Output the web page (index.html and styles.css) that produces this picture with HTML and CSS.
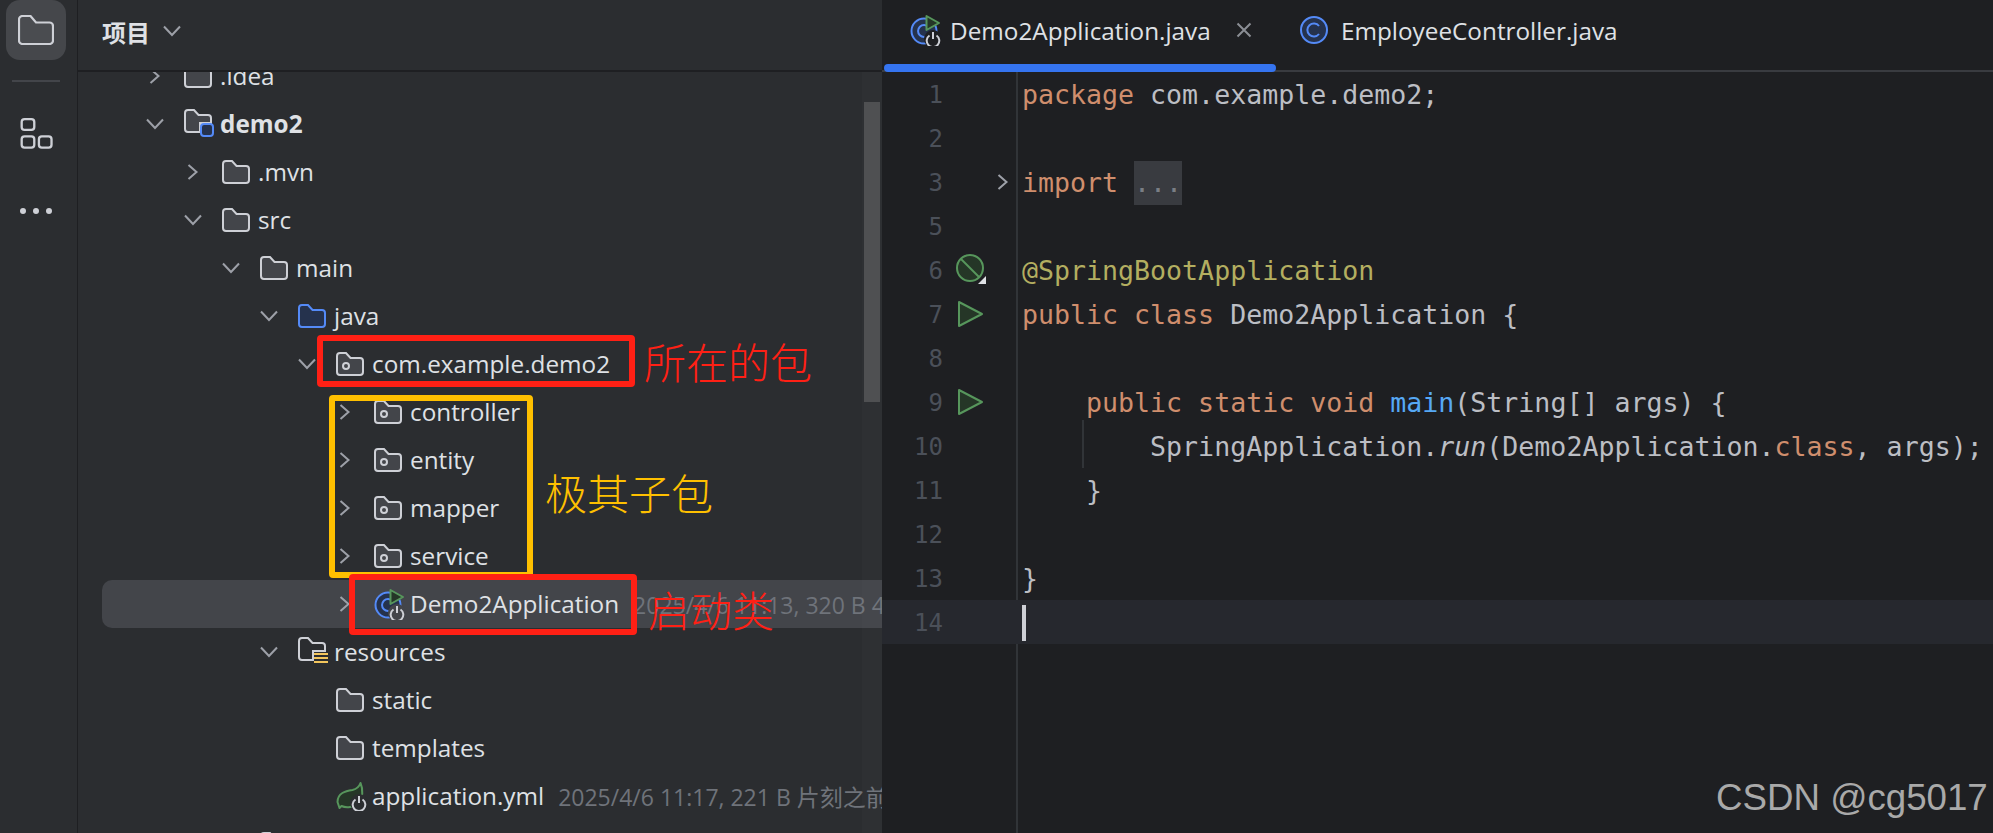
FILE: index.html
```html
<!DOCTYPE html>
<html lang="zh">
<head>
<meta charset="utf-8">
<title>Demo2Application.java</title>
<link rel="stylesheet" href="styles.css">
</head>
<body>
<svg class="defs" aria-hidden="true">
  <defs>
    <symbol id="ch-r" viewBox="0 0 22 22"><polyline points="6.5,4 14.5,11 6.5,18" fill="none" stroke="#9da0a8" stroke-width="2"/></symbol>
    <symbol id="ch-d" viewBox="0 0 22 22"><polyline points="3,6.5 11,15 19,6.5" fill="none" stroke="#9da0a8" stroke-width="2"/></symbol>
    <symbol id="folder" viewBox="0 0 28 24"><path d="M1 4a3 3 0 0 1 3-3h6l4.500 5H24a3 3 0 0 1 3 3v11a3 3 0 0 1-3 3H4a3 3 0 0 1-3-3z" fill="#43454a" stroke="#ced0d6" stroke-width="2"/></symbol>
    <symbol id="pkg" viewBox="0 0 28 24"><path d="M1 4a3 3 0 0 1 3-3h6l4.500 5H24a3 3 0 0 1 3 3v11a3 3 0 0 1-3 3H4a3 3 0 0 1-3-3z" fill="#43454a" stroke="#ced0d6" stroke-width="2"/><circle cx="10" cy="14" r="3" fill="none" stroke="#ced0d6" stroke-width="2"/></symbol>
    <symbol id="src" viewBox="0 0 28 24"><path d="M1 4a3 3 0 0 1 3-3h6l4.500 5H24a3 3 0 0 1 3 3v11a3 3 0 0 1-3 3H4a3 3 0 0 1-3-3z" fill="#25324d" stroke="#548af7" stroke-width="2"/></symbol>
    <symbol id="module" viewBox="0 0 32 30"><path d="M1 4a3 3 0 0 1 3-3h6l4.500 5H24a3 3 0 0 1 3 3v5H16v9H4a3 3 0 0 1-3-3z" fill="#43454a" stroke="#ced0d6" stroke-width="2"/><rect x="17" y="15" width="12" height="12" rx="3" fill="#25324d" stroke="#548af7" stroke-width="2"/></symbol>
    <symbol id="res" viewBox="0 0 32 30"><path d="M1 4a3 3 0 0 1 3-3h6l4.500 5H24a3 3 0 0 1 3 3v5H15v9H4a3 3 0 0 1-3-3z" fill="#2b2d30" stroke="#ced0d6" stroke-width="2"/><path d="M16 17h14M16 21h14M16 25h14" stroke="#f2c55c" stroke-width="2"/></symbol>
    <symbol id="app" viewBox="0 0 32 32"><circle cx="14" cy="17" r="12.500" fill="#25324d" stroke="#548af7" stroke-width="2"/><path d="M18.500 13a6 6 0 1 0 0 8" fill="none" stroke="#548af7" stroke-width="2"/><path d="M16.500 2v14l12.500-7z" fill="#253627" stroke="#57965c" stroke-width="2" stroke-linejoin="round"/><circle cx="23" cy="25" r="9" fill="var(--knock,#2b2d30)"/><path d="M19.500 21.500a6.300 6.300 0 1 0 7 0M23 18v7" fill="none" stroke="#ced0d6" stroke-width="2"/></symbol>
    <symbol id="leaf" viewBox="0 0 32 30"><path d="M1.500 21c0-9 8-11 15-12 4-1 7-4 8-7 3 7 2 15-1 19-5 6-14 6-18 4l-2 2z" fill="#253627" stroke="#57965c" stroke-width="2" stroke-linejoin="round"/><circle cx="23" cy="22" r="9" fill="#2b2d30"/><path d="M19.500 18.500a6.300 6.300 0 1 0 7 0M23 15v7" fill="none" stroke="#ced0d6" stroke-width="2"/></symbol>
    <symbol id="play" viewBox="0 0 26 28"><path d="M1 2v24l23-12z" fill="#253627" stroke="#57965c" stroke-width="2" stroke-linejoin="round"/></symbol>
  </defs>
</svg>

<div class="app">
  <nav class="strip">
    <div class="strip-active">
      <svg class="strip-folder" viewBox="0 0 36 30"><path d="M1 4.500a3.500 3.500 0 0 1 3.500-3.500h8l5.500 6.500h13.500a3.500 3.500 0 0 1 3.500 3.500v14.500a3.500 3.500 0 0 1-3.500 3.500h-27a3.500 3.500 0 0 1-3.500-3.500z" fill="#4a4c50" stroke="#ced0d6" stroke-width="2.200"/></svg>
    </div>
    <div class="strip-sep"></div>
    <svg class="strip-tools" viewBox="0 0 33 32"><g fill="none" stroke="#ced0d6" stroke-width="2.400"><rect x="1.200" y="1.200" width="13" height="11" rx="3"/><rect x="1.200" y="19" width="13" height="11.500" rx="3"/><rect x="19" y="19" width="13" height="11.500" rx="3"/></g></svg>
    <svg class="strip-more" viewBox="0 0 33 8"><circle cx="3" cy="4" r="3" fill="#ced0d6"/><circle cx="16" cy="4" r="3" fill="#ced0d6"/><circle cx="29" cy="4" r="3" fill="#ced0d6"/></svg>
  </nav>

  <section class="project">
    <header class="project-head">
      <span class="project-title">项目</span>
      <svg class="icon-chev"><use href="#ch-d"/></svg>
    </header>
    <div class="tree-wrap">
      <div class="tree">
        <div class="row l0"><svg class="chev"><use href="#ch-r"/></svg><svg class="fi"><use href="#folder"/></svg><span class="name">.idea</span></div>
        <div class="row l0"><svg class="chev"><use href="#ch-d"/></svg><svg class="fi fi-wide"><use href="#module"/></svg><span class="name bold">demo2</span></div>
        <div class="row l1"><svg class="chev"><use href="#ch-r"/></svg><svg class="fi"><use href="#folder"/></svg><span class="name">.mvn</span></div>
        <div class="row l1"><svg class="chev"><use href="#ch-d"/></svg><svg class="fi"><use href="#folder"/></svg><span class="name">src</span></div>
        <div class="row l2"><svg class="chev"><use href="#ch-d"/></svg><svg class="fi"><use href="#folder"/></svg><span class="name">main</span></div>
        <div class="row l3"><svg class="chev"><use href="#ch-d"/></svg><svg class="fi"><use href="#src"/></svg><span class="name">java</span></div>
        <div class="row l4"><svg class="chev"><use href="#ch-d"/></svg><svg class="fi"><use href="#pkg"/></svg><span class="name">com.example.demo2</span></div>
        <div class="row l5"><svg class="chev"><use href="#ch-r"/></svg><svg class="fi"><use href="#pkg"/></svg><span class="name">controller</span></div>
        <div class="row l5"><svg class="chev"><use href="#ch-r"/></svg><svg class="fi"><use href="#pkg"/></svg><span class="name">entity</span></div>
        <div class="row l5"><svg class="chev"><use href="#ch-r"/></svg><svg class="fi"><use href="#pkg"/></svg><span class="name">mapper</span></div>
        <div class="row l5"><svg class="chev"><use href="#ch-r"/></svg><svg class="fi"><use href="#pkg"/></svg><span class="name">service</span></div>
        <div class="row l5 selected"><svg class="chev"><use href="#ch-r"/></svg><svg class="fi fi-app"><use href="#app"/></svg><span class="name">Demo2Application</span><span class="meta">2025/4/6 11:13, 320 B 4 分钟前</span></div>
        <div class="row l3"><svg class="chev"><use href="#ch-d"/></svg><svg class="fi fi-wide"><use href="#res"/></svg><span class="name">resources</span></div>
        <div class="row l4"><span class="chev"></span><svg class="fi"><use href="#folder"/></svg><span class="name">static</span></div>
        <div class="row l4"><span class="chev"></span><svg class="fi"><use href="#folder"/></svg><span class="name">templates</span></div>
        <div class="row l4"><span class="chev"></span><svg class="fi fi-wide"><use href="#leaf"/></svg><span class="name">application.yml</span><span class="meta">2025/4/6 11:17, 221 B 片刻之前</span></div>
        <div class="row l2"><svg class="chev"><use href="#ch-r"/></svg><svg class="fi"><use href="#folder"/></svg><span class="name">test</span></div>
      </div>
      <div class="track"><div class="thumb"></div></div>
    </div>
  </section>

  <main class="editor">
    <div class="tabs">
      <div class="tab active"><svg class="tab-icon-app"><use href="#app"/></svg><span class="tab-name">Demo2Application.java</span><svg class="tab-close" viewBox="0 0 16 16"><path d="M1.500 1.500l13 13M14.500 1.500l-13 13" stroke="#8b8e95" stroke-width="2"/></svg></div>
      <div class="tab"><svg class="tab-icon" viewBox="0 0 28 28"><circle cx="14" cy="14" r="13" fill="#25324d" stroke="#548af7" stroke-width="2"/><path d="M19 10a6.500 6.500 0 1 0 0 8" fill="none" stroke="#548af7" stroke-width="2"/></svg><span class="tab-name">EmployeeController.java</span></div>
    </div>
    <div class="code">
      <div class="line"><span class="ln">1</span><span class="gi"></span><span class="fold"></span><code><i class="k">package</i> com.example.demo2;</code></div>
      <div class="line"><span class="ln">2</span><span class="gi"></span><span class="fold"></span><code></code></div>
      <div class="line"><span class="ln">3</span><span class="gi"></span><span class="fold"><svg class="fold-chev"><use href="#ch-r"/></svg></span><code><i class="k">import</i> <span class="folded">...</span></code></div>
      <div class="line"><span class="ln">5</span><span class="gi"></span><span class="fold"></span><code></code></div>
      <div class="line"><span class="ln">6</span><span class="gi"><svg class="gi-noentry" viewBox="0 0 32 30"><circle cx="14" cy="14" r="13" fill="#253627" stroke="#57965c" stroke-width="2"/><path d="M5 5l18 18" stroke="#57965c" stroke-width="2"/><path d="M30 22v8h-8z" fill="#dfe1e5"/></svg></span><span class="fold"></span><code><i class="a">@SpringBootApplication</i></code></div>
      <div class="line"><span class="ln">7</span><span class="gi"><svg class="gi-play"><use href="#play"/></svg></span><span class="fold"></span><code><i class="k">public class</i> Demo2Application {</code></div>
      <div class="line"><span class="ln">8</span><span class="gi"></span><span class="fold"></span><code></code></div>
      <div class="line"><span class="ln">9</span><span class="gi"><svg class="gi-play"><use href="#play"/></svg></span><span class="fold"></span><code>    <i class="k">public static void</i> <i class="m">main</i>(String[] args) {</code></div>
      <div class="line guide"><span class="ln">10</span><span class="gi"></span><span class="fold"></span><code>        SpringApplication.<em>run</em>(Demo2Application.<i class="k">class</i>, args);</code></div>
      <div class="line"><span class="ln">11</span><span class="gi"></span><span class="fold"></span><code>    }</code></div>
      <div class="line"><span class="ln">12</span><span class="gi"></span><span class="fold"></span><code></code></div>
      <div class="line"><span class="ln">13</span><span class="gi"></span><span class="fold"></span><code>}</code></div>
      <div class="line current"><span class="ln">14</span><span class="gi"></span><span class="fold"></span><code><span class="caret"></span></code></div>
    </div>
  </main>

  <div class="mark mark-red mark-pkg"></div>
  <div class="mark mark-yellow mark-sub"></div>
  <div class="mark mark-red mark-boot"></div>
  <span class="note note-red note-pkg">所在的包</span>
  <span class="note note-yellow note-sub">极其子包</span>
  <span class="note note-red note-boot">启动类</span>
  <span class="watermark">CSDN @cg5017</span>
</div>
</body>
</html>
```
FILE: styles.css
```css
* { box-sizing: border-box; }
html, body { margin: 0; padding: 0; background: #1e1f22; }
body { width: 1993px; height: 833px; overflow: hidden; font-family: "Open Sans", "Noto Sans CJK SC", sans-serif; }
.defs { position: absolute; width: 0; height: 0; }

.app { position: relative; display: flex; width: 1993px; height: 833px; overflow: hidden; }

/* tool strip */
.strip { flex: 0 0 78px; display: flex; flex-direction: column; align-items: center; background: #2b2d30; border-right: 1px solid #1e1f22; }
.strip-active { width: 60px; height: 60px; display: flex; align-items: center; justify-content: center; background: #45474b; border-radius: 14px; margin-right: 5px; }
.strip-folder { width: 36px; height: 30px; }
.strip-sep { width: 48px; height: 2px; background: #43454a; margin: 20px 5px 0 0; }
.strip-tools { width: 33px; height: 31px; margin: 36px 5px 0 0; }
.strip-more { width: 33px; height: 8px; margin: 58px 5px 0 0; }

/* project panel */
.project { flex: 0 0 804px; width: 804px; min-width: 0; overflow: hidden; display: flex; flex-direction: column; background: #2b2d30; min-height: 0; }
.project-head { flex: 0 0 72px; display: flex; align-items: center; padding: 0 0 8px 24px; border-bottom: 2px solid #1e1f22; }
.project-title { font-size: 24px; font-weight: 700; color: #dfe1e5; font-family: "Noto Sans CJK SC", sans-serif; }
.icon-chev { width: 22px; height: 22px; margin-left: 11px; }
.tree-wrap { position: relative; flex: 1; min-height: 0; overflow: hidden; }
.tree { padding-left: 24px; margin-top: -20px; }
.row { display: flex; align-items: center; height: 48px; white-space: nowrap; overflow: hidden; color: #dfe1e5; font-size: 24.3px; }
.l0 { padding-left: 42px; }
.l1 { padding-left: 80px; }
.l2 { padding-left: 118px; }
.l3 { padding-left: 156px; }
.l4 { padding-left: 194px; }
.l5 { padding-left: 232px; }
.chev { flex: 0 0 22px; width: 22px; height: 22px; margin-right: 18px; }
.fi { flex: 0 0 28px; width: 28px; height: 24px; margin-right: 8px; }
.fi-wide { flex-basis: 32px; width: 32px; height: 30px; margin-right: 4px; }
.fi-app { flex-basis: 32px; width: 32px; height: 32px; margin-right: 4px; --knock: #43454a; }
.name { line-height: 48px; }
.bold { font-weight: 700; }
.meta { margin-left: 14px; color: #6f737a; font-size: 23px; }
.selected { background: #43454a; border-radius: 10px 0 0 10px; }
.track { position: absolute; top: 0; right: 0; bottom: 0; width: 20px; background: rgba(255,255,255,0.015); }
.thumb { position: absolute; top: 30px; left: 2px; width: 16px; height: 300px; background: #4f5052; }

/* editor */
.editor { flex: 1; min-width: 0; display: flex; flex-direction: column; background: #1e1f22; }
.tabs { flex: 0 0 72px; display: flex; border-bottom: 2px solid #393b40; color: #dfe1e5; font-size: 24.3px; }
.tab { position: relative; display: flex; align-items: center; height: 70px; padding: 0 0 10px 24px; }
.tab.active { width: 394px; padding-left: 28px; }
.tab.active::after { content: ""; position: absolute; left: 2px; right: 0; bottom: -2px; height: 8px; background: #3574f0; border-radius: 4px; }
.tab-icon-app { width: 32px; height: 32px; margin-right: 8px; --knock: #1e1f22; }
.tab-icon { width: 28px; height: 28px; margin-right: 13px; }
.tab-close { width: 16px; height: 16px; margin-left: 25px; }
.code { position: relative; flex: 1; font-family: "DejaVu Sans Mono", monospace; font-size: 26.6px; }
.code::before { content: ""; position: absolute; left: 134px; top: 0; bottom: 0; width: 2px; background: #313438; }
.line { position: relative; display: flex; align-items: center; height: 44px; }
.current { background: #26282e; }
.guide::after { content: ""; position: absolute; left: 200px; top: -4px; bottom: 0; width: 2px; background: #313438; }
.ln { flex: 0 0 61px; text-align: right; color: #4b5059; font-size: 24px; padding-top: 2px; }
.gi { flex: 0 0 50px; height: 44px; display: flex; align-items: center; padding-left: 13px; }
.gi-noentry { width: 32px; height: 30px; margin-top: -3px; }
.gi-play { width: 26px; height: 28px; margin-left: 2px; }
.fold { flex: 0 0 29px; display: flex; align-items: center; }
.fold-chev { width: 22px; height: 22px; margin-left: -1px; }
code { font: inherit; color: #bcbec4; white-space: pre; line-height: 44px; display: block; padding-top: 1px; }
code i { font-style: normal; }
code em { font-style: italic; }
.k { color: #cf8e6d; }
.a { color: #b3ae60; }
.m { color: #56a8f5; }
.folded { display: inline-block; background: #393b40; color: #7a7e85; line-height: 44px; }
.caret { display: block; width: 4px; height: 36px; background: #ced0d6; margin: 3px 0; }

/* annotations drawn over the screenshot */
.mark { position: absolute; border: 6px solid; border-radius: 4px; }
.mark-red { border-color: #ff2015; }
.mark-yellow { border-color: #ffc000; }
.mark-pkg { left: 317px; top: 335px; width: 318px; height: 52px; }
.mark-sub { left: 329px; top: 395px; width: 204px; height: 183px; }
.mark-boot { left: 349px; top: 574px; width: 288px; height: 61px; }
.note { position: absolute; font-family: "Noto Sans CJK SC", sans-serif; font-size: 42px; font-weight: 300; line-height: 50px; white-space: nowrap; }
.note-red { color: #ff2015; }
.note-yellow { color: #ffc000; }
.note-pkg { left: 644px; top: 336px; }
.note-sub { left: 545px; top: 467px; }
.note-boot { left: 648px; top: 584px; }
.watermark { position: absolute; left: 1716px; top: 775px; font-family: "Liberation Sans", sans-serif; font-size: 36.7px; line-height: 46px; color: #a9a9a9; white-space: nowrap; }
```
